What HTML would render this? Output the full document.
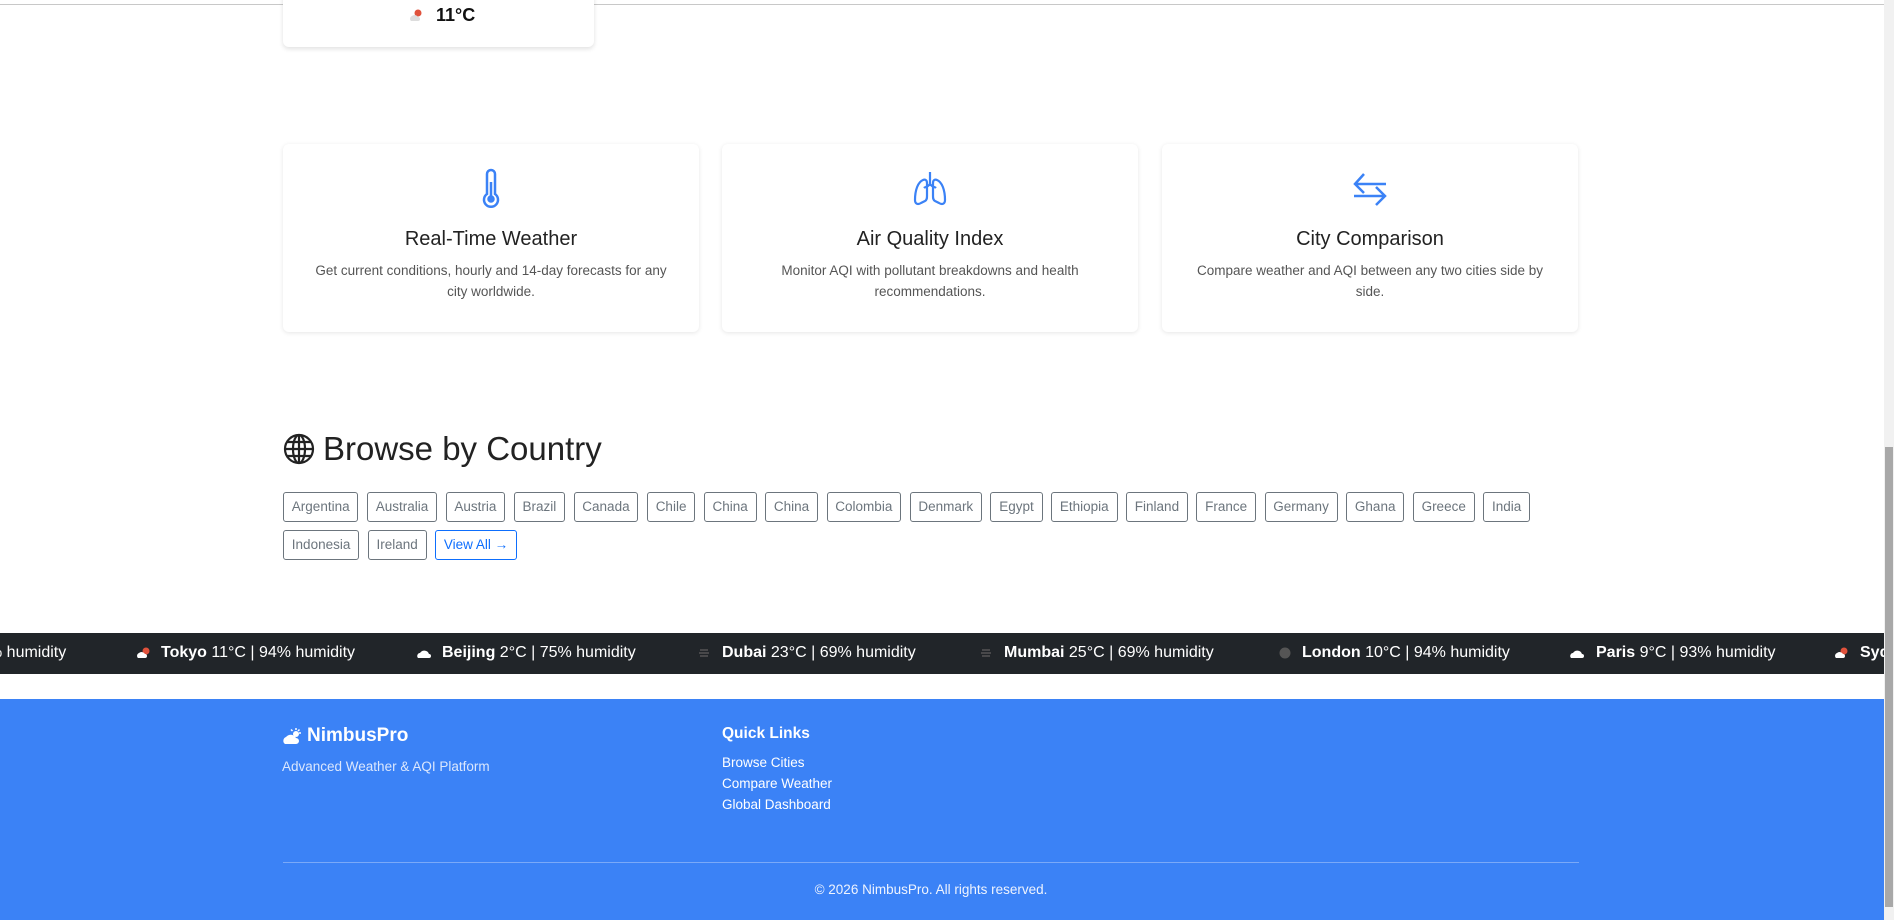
<!DOCTYPE html>
<html><head><meta charset="utf-8"><style>
*{box-sizing:border-box;margin:0;padding:0}
body{width:1894px;height:920px;overflow:hidden;background:#fff;font-family:"Liberation Sans",sans-serif;color:#212529;position:relative}
.topline{position:absolute;left:0;top:4px;width:1884px;height:1px;background:#c8c8c8}
.topcard{position:absolute;left:283px;top:-10px;width:311px;height:57px;background:#fff;border-radius:6px;box-shadow:0 2px 5px rgba(0,0,0,.12)}
.temp{position:absolute;left:411px;top:5px;font-size:18px;font-weight:bold;color:#111}
.card{position:absolute;top:144px;width:416px;height:188px;background:#fff;border-radius:6px;box-shadow:0 1px 5px rgba(0,0,0,.1);text-align:center}
.card svg{position:absolute;left:188px;top:24px}
.card h3{position:absolute;width:100%;font-size:20px;font-weight:normal;color:#222;top:84px}
.card p{position:absolute;top:116px;left:24px;right:24px;font-size:13.5px;line-height:21px;color:#555}
h2{position:absolute;left:283px;top:430px;font-size:33px;font-weight:normal;color:#222;display:flex;align-items:center;gap:8px}
.pills{position:absolute;left:283px;top:492px;width:1300px;display:flex;flex-wrap:wrap;gap:8px 8.5px}
.pill{height:30px;padding:0 7.8px;border:1px solid #6c757d;border-radius:3px;font-size:13.5px;line-height:28px;color:#6c757d}
.pill.b{border-color:#0d6efd;color:#0d6efd}
.ticker{position:absolute;left:0;top:633px;width:1884px;height:41px;background:#212529;color:#fff;font-size:16px;overflow:hidden}
.ti{position:absolute;top:11px;white-space:nowrap}
.ti b{font-weight:bold}
.ic{position:absolute;top:14px}
.footer{position:absolute;left:0;top:699px;width:1884px;height:221px;background:#3b82f6;color:#fff}
.brand{position:absolute;left:283px;top:26px;font-size:19px;font-weight:bold;display:flex;align-items:center;gap:4px}
.sub{position:absolute;left:282px;top:60px;font-size:13.5px;color:#dbe7fd}
.ql{position:absolute;left:722px;top:26px;font-size:15.5px;font-weight:bold}
.links{position:absolute;left:722px;top:53px;font-size:13.5px;line-height:21px}
.hr{position:absolute;left:283px;top:163px;width:1296px;height:1px;background:#7aa9f8}
.copy{position:absolute;left:283px;width:1296px;top:183px;text-align:center;font-size:13.5px;color:#eef3fe}
.sb{position:absolute;right:0;top:0;width:10px;height:920px;background:#f1f1f1}
.sb div{position:absolute;left:1px;top:447px;width:8px;height:460px;background:#a8a8a8}
</style></head><body>
<div class="topline"></div>
<div class="topcard"></div>
<svg style="position:absolute;left:408px;top:8px" width="16" height="16" viewBox="0 0 16 16"><circle cx="10" cy="5" r="3.5" fill="#e0523c"/><path d="M3 13a3 3 0 0 1 1-5 4 4 0 0 1 6 1 2 2 0 0 1 0 4z" fill="#ddd"/></svg>
<div class="temp" style="left:436px">11°C</div>

<div class="card" style="left:283px">
<svg width="40" height="42" viewBox="0 0 40 42" fill="none" stroke="#3b82f6" stroke-width="2.5"><path d="M16 26V6a4 4 0 0 1 8 0v20a7 7 0 1 1-8 0z"/><circle cx="20" cy="31" r="2.5" fill="#3b82f6"/><line x1="20" y1="28" x2="20" y2="14"/></svg>
<h3>Real-Time Weather</h3><p>Get current conditions, hourly and 14-day forecasts for any city worldwide.</p></div>
<div class="card" style="left:722px">
<svg width="40" height="42" viewBox="0 0 40 42" fill="none" stroke="#3b82f6" stroke-width="2.2"><path d="M20 4v14M20 16c-2 3-5 3-6 4M20 16c2 3 5 3 6 4"/><path d="M13 12c-5 2-8 10-8 20 0 4 3 5 6 3l4-2c2-1 2-3 2-5V15c0-3-2-4-4-3z"/><path d="M27 12c5 2 8 10 8 20 0 4-3 5-6 3l-4-2c-2-1-2-3-2-5V15c0-3 2-4 4-3z"/></svg>
<h3>Air Quality Index</h3><p>Monitor AQI with pollutant breakdowns and health recommendations.</p></div>
<div class="card" style="left:1162px">
<svg width="40" height="42" viewBox="0 0 40 42" fill="none" stroke="#3b82f6" stroke-width="2.5"><path d="M36 16H6M14 6L5 16l9 9"/><path d="M4 28h30M26 19l9 9-9 9"/></svg>
<h3>City Comparison</h3><p>Compare weather and AQI between any two cities side by side.</p></div>

<h2><svg width="32" height="32" viewBox="0 0 32 32" fill="none" stroke="#222" stroke-width="2.2"><circle cx="16" cy="16" r="14"/><ellipse cx="16" cy="16" rx="6" ry="14"/><path d="M2 16h28M4 9h24M4 23h24M16 2v28"/></svg>Browse by Country</h2>
<div class="pills">
<span class="pill">Argentina</span><span class="pill">Australia</span><span class="pill">Austria</span><span class="pill">Brazil</span><span class="pill">Canada</span><span class="pill">Chile</span><span class="pill">China</span><span class="pill">China</span><span class="pill">Colombia</span><span class="pill">Denmark</span><span class="pill">Egypt</span><span class="pill">Ethiopia</span><span class="pill">Finland</span><span class="pill">France</span><span class="pill">Germany</span><span class="pill">Ghana</span><span class="pill">Greece</span><span class="pill">India</span>
<span class="pill">Indonesia</span><span class="pill">Ireland</span><span class="pill b">View All →</span></div>

<div class="ticker">
<span class="ti" style="left:-12px">% humidity</span>
<svg class="ic" style="left:136px" width="15" height="12" viewBox="0 0 15 12"><circle cx="10" cy="4" r="3.5" fill="#e0523c"/><path d="M2 11a3 3 0 0 1 1-5 4 4 0 0 1 6 1 2 2 0 0 1 0 4z" fill="#fff"/></svg>
<span class="ti" style="left:161px"><b>Tokyo</b> 11°C | 94% humidity</span>
<svg class="ic" style="left:417px" width="15" height="12" viewBox="0 0 15 12"><path d="M1 11a3 3 0 0 1 2-5 5 5 0 0 1 9 1 2 2 0 0 1 0 4z" fill="#fff"/></svg>
<span class="ti" style="left:442px"><b>Beijing</b> 2°C | 75% humidity</span>
<svg class="ic" style="left:698px" width="12" height="12" viewBox="0 0 12 12"><path d="M2 3h8M1 6h10M2 9h8" stroke="#555" stroke-width="1.5"/></svg>
<span class="ti" style="left:722px"><b>Dubai</b> 23°C | 69% humidity</span>
<svg class="ic" style="left:980px" width="12" height="12" viewBox="0 0 12 12"><path d="M2 3h8M1 6h10M2 9h8" stroke="#555" stroke-width="1.5"/></svg>
<span class="ti" style="left:1004px"><b>Mumbai</b> 25°C | 69% humidity</span>
<svg class="ic" style="left:1279px" width="12" height="12" viewBox="0 0 12 12"><circle cx="6" cy="6" r="5.5" fill="#555"/></svg>
<span class="ti" style="left:1302px"><b>London</b> 10°C | 94% humidity</span>
<svg class="ic" style="left:1570px" width="15" height="12" viewBox="0 0 15 12"><path d="M1 11a3 3 0 0 1 2-5 5 5 0 0 1 9 1 2 2 0 0 1 0 4z" fill="#fff"/></svg>
<span class="ti" style="left:1596px"><b>Paris</b> 9°C | 93% humidity</span>
<svg class="ic" style="left:1834px" width="15" height="12" viewBox="0 0 15 12"><circle cx="10" cy="4" r="3.5" fill="#e0523c"/><path d="M2 11a3 3 0 0 1 1-5 4 4 0 0 1 6 1 2 2 0 0 1 0 4z" fill="#fff"/></svg>
<span class="ti" style="left:1860px"><b>Sydney</b></span>
</div>

<div class="footer">
<div class="brand"><svg width="20" height="18" viewBox="0 0 20 18"><g stroke="#fff" stroke-width="1.5"><path d="M13 1v2M18 6h-2M16.5 2.5l-1.5 1.5M8 2.5l1.5 1.5"/></g><circle cx="13" cy="7" r="3" fill="#fff"/><path d="M2 17a4 4 0 0 1 1-7 6 6 0 0 1 10 1 3 3 0 0 1 0 6z" fill="#fff"/></svg>NimbusPro</div>
<div class="sub">Advanced Weather &amp; AQI Platform</div>
<div class="ql">Quick Links</div>
<div class="links">Browse Cities<br>Compare Weather<br>Global Dashboard</div>
<div class="hr"></div>
<div class="copy">© 2026 NimbusPro. All rights reserved.</div>
</div>
<div class="sb"><div></div></div>
</body></html>
